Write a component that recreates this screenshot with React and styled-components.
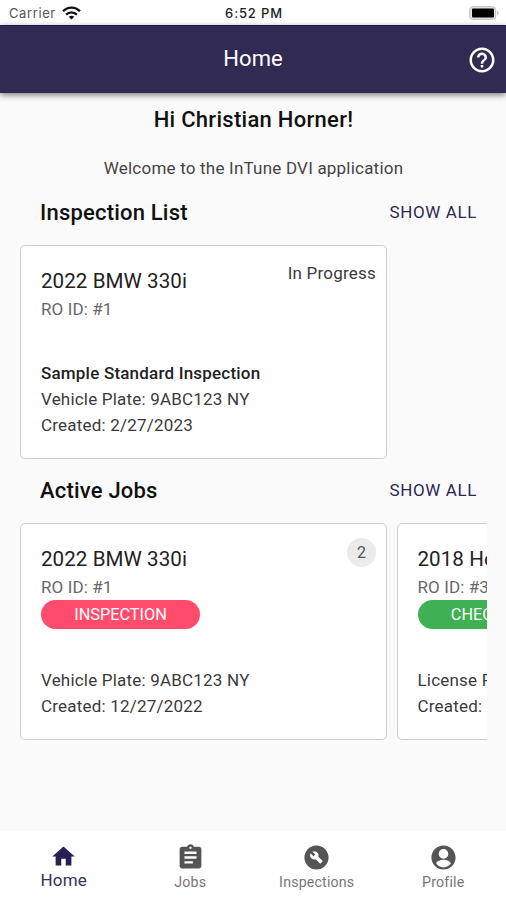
import React from "react";
import styled, { createGlobalStyle } from "styled-components";
import {
  MdHome,
  MdAssignment,
  MdBuildCircle,
  MdHelpOutline,
} from "react-icons/md";

const GlobalStyle = createGlobalStyle`
  * { box-sizing: border-box; }
  body { margin: 0; background: #fafafa; font-family: Roboto, "Liberation Sans", sans-serif; color: #222; }
`;

const Screen = styled.div`
  width: 506px;
  height: 900px;
  display: flex;
  flex-direction: column;
  overflow: hidden;
  background: #fafafa;
`;

const StatusBar = styled.div`
  height: 25px;
  flex: none;
  display: grid;
  grid-template-columns: 1fr auto 1fr;
  align-items: center;
  padding: 1px 7px 0 9px;
  background: #fff;
  font-family: Inter, sans-serif;
  font-size: 13px;
  color: #555;
`;

const Carrier = styled.div`
  display: flex;
  align-items: center;
  gap: 6px;
  letter-spacing: 0.6px;
`;

const Clock = styled.div`
  font-weight: 500;
  font-size: 13px;
  letter-spacing: 0.85px;
  color: #222;
`;

const StatusEnd = styled.div`
  display: flex;
  justify-content: flex-end;
`;

const AppBar = styled.header`
  height: 68px;
  flex: none;
  display: grid;
  grid-template-columns: 48px 1fr 48px;
  align-items: center;
  background: #312b53;
  border-top: 1px solid #1d1650;
  box-shadow: 0 2px 6px rgba(0, 0, 0, 0.5);
  color: #fff;
  z-index: 1;
`;

const AppBarTitle = styled.h1`
  grid-column: 2;
  margin: 0 0 2px;
  text-align: center;
  font-size: 22px;
  font-weight: 400;
  letter-spacing: 0.1px;
`;

const HelpButton = styled.button`
  width: 48px;
  height: 48px;
  padding: 0;
  border: 0;
  background: none;
  color: inherit;
  display: grid;
  place-items: center;
`;

const Content = styled.main`
  flex: 1;
  min-height: 0;
  padding: 11px 19px 0 20px;
  overflow: hidden;
`;

const Greeting = styled.h2`
  margin: 0;
  text-align: center;
  font-size: 22px;
  line-height: 32px;
  font-weight: 500;
  letter-spacing: 0.28px;
  color: #111;
`;

const Welcome = styled.p`
  margin: 17px 0 0;
  text-align: center;
  font-size: 17px;
  line-height: 30px;
  letter-spacing: 0.21px;
  color: #444;
`;

const SectionHeader = styled.div`
  height: ${(p) => p.$height}px;
  padding: 0 10px ${(p) => p.$lift}px 20px;
  display: flex;
  align-items: center;
  justify-content: space-between;
`;

const SectionTitle = styled.h3`
  margin: 0;
  font-size: 22px;
  font-weight: 500;
  letter-spacing: 0.2px;
  color: #111;
`;

const ShowAll = styled.button`
  padding: 0;
  border: 0;
  background: none;
  font: inherit;
  font-size: 17px;
  letter-spacing: 0.6px;
  color: #2d2753;
`;

const CardRow = styled.div`
  display: flex;
  gap: 9.5px;
  overflow: hidden;
`;

const Card = styled.article`
  width: 367px;
  height: ${(p) => p.$height}px;
  flex: none;
  padding: 20px 10px 20px 20px;
  display: flex;
  flex-direction: column;
  justify-content: space-between;
  background: #fff;
  border: 1.5px solid #cfcfcf;
  border-radius: 5px;
`;

const CardTop = styled.div`
  display: flex;
  justify-content: space-between;
  align-items: flex-start;
`;

const Vehicle = styled.div`
  font-size: 20.6px;
  line-height: 30px;
  letter-spacing: 0.05px;
  color: #222;
`;

const OrderId = styled.div`
  font-size: 17px;
  line-height: 26px;
  letter-spacing: 0.1px;
  color: #686868;
`;

const Detail = styled.div`
  font-size: 17px;
  line-height: 26px;
  letter-spacing: 0.2px;
  font-weight: ${(p) => (p.$strong ? 500 : 400)};
  color: ${(p) => (p.$strong ? "#222" : "#3a3a3a")};
`;

const Status = styled.div`
  margin-top: -6px;
  font-size: 17px;
  line-height: 26px;
  letter-spacing: 0.22px;
  color: #3a3a3a;
`;

const Stage = styled.div`
  width: 159px;
  height: 29px;
  border-radius: 15px;
  display: grid;
  place-items: center;
  background: ${(p) => p.$color};
  color: #fff;
  font-size: 16.3px;
`;

const Count = styled.div`
  width: 29px;
  height: 29px;
  margin-top: -6px;
  border-radius: 50%;
  display: grid;
  place-items: center;
  background: #ebebeb;
  color: #555;
  font-size: 16px;
`;

const TabBar = styled.nav`
  height: 69px;
  flex: none;
  display: grid;
  grid-template-columns: repeat(4, 1fr);
  background: #fff;
`;

const Tab = styled.div`
  display: flex;
  flex-direction: column;
  align-items: center;
  padding: 12px 0 0 1px;
  color: ${(p) => (p.$active ? "#262055" : "#555")};
`;

const TabLabel = styled.span`
  font-size: ${(p) => (p.$active ? 17 : 14.2)}px;
  line-height: 20px;
  letter-spacing: ${(p) => (p.$active ? 0.2 : 0.18)}px;
  color: ${(p) => (p.$active ? "#373158" : "#777")};
`;

function WifiIcon() {
  return (
    <svg width="19" height="14" viewBox="0 0 19 14" fill="none" stroke="#111" strokeWidth="2.2">
      <path d="M1 5.3C5.8.4 13.2.4 18 5.3" />
      <path d="M4.1 8.6c3-3 7.8-3 10.8 0" />
      <path d="M9.5 13.4 6.8 10.7c1.5-1.3 3.9-1.3 5.4 0z" fill="#111" stroke="none" />
    </svg>
  );
}

function BatteryIcon() {
  return (
    <svg width="30" height="14" viewBox="0 0 30 14">
      <rect x="0.7" y="0.7" width="26" height="12.6" rx="3" fill="#e4e4e4" stroke="#bdbdbd" />
      <rect x="3" y="2.5" width="22" height="9" rx="1" fill="#000" />
      <path d="M28 4.7c2 .8 2 3.8 0 4.6z" fill="#bdbdbd" />
    </svg>
  );
}

function ProfileIcon({ size }) {
  return (
    <svg width={size} height={size} viewBox="0 0 24 24" fill="currentColor">
      <path d="M12 2C6.48 2 2 6.48 2 12s4.48 10 10 10 10-4.48 10-10S17.52 2 12 2zm0 3a4 4 0 1 1 0 8 4 4 0 0 1 0-8zm0 15.2c-2.5 0-4.71-1.28-6-3.22.03-1.99 4-3.08 6-3.08 1.99 0 5.97 1.09 6 3.08-1.29 1.94-3.5 3.22-6 3.22z" />
    </svg>
  );
}

const tabs = [
  { label: "Home", Icon: MdHome, active: true },
  { label: "Jobs", Icon: MdAssignment },
  { label: "Inspections", Icon: MdBuildCircle },
  { label: "Profile", Icon: ProfileIcon },
];

const jobs = [
  {
    vehicle: "2022 BMW 330i",
    order: "RO ID: #1",
    stage: "INSPECTION",
    color: "#ff4c6c",
    count: 2,
    details: ["Vehicle Plate: 9ABC123 NY", "Created: 12/27/2022"],
  },
  {
    vehicle: "2018 Honda",
    order: "RO ID: #3",
    stage: "CHECKED IN",
    color: "#3fb054",
    details: ["License Plate:", "Created:"],
  },
];

export default function App() {
  return (
    <Screen>
      <GlobalStyle />
      <StatusBar>
        <Carrier>
          Carrier
          <WifiIcon />
        </Carrier>
        <Clock>6:52 PM</Clock>
        <StatusEnd>
          <BatteryIcon />
        </StatusEnd>
      </StatusBar>
      <AppBar>
        <AppBarTitle>Home</AppBarTitle>
        <HelpButton aria-label="Help">
          <MdHelpOutline size={30} />
        </HelpButton>
      </AppBar>
      <Content>
        <Greeting>Hi Christian Horner!</Greeting>
        <Welcome>Welcome to the InTune DVI application</Welcome>
        <SectionHeader $height={62} $lift={4}>
          <SectionTitle>Inspection List</SectionTitle>
          <ShowAll>SHOW ALL</ShowAll>
        </SectionHeader>
        <CardRow>
          <Card $height={214}>
            <CardTop>
              <div>
                <Vehicle>2022 BMW 330i</Vehicle>
                <OrderId>RO ID: #1</OrderId>
              </div>
              <Status>In Progress</Status>
            </CardTop>
            <div>
              <Detail $strong>Sample Standard Inspection</Detail>
              <Detail>Vehicle Plate: 9ABC123 NY</Detail>
              <Detail>Created: 2/27/2023</Detail>
            </div>
          </Card>
        </CardRow>
        <SectionHeader $height={64} $lift={2}>
          <SectionTitle>Active Jobs</SectionTitle>
          <ShowAll>SHOW ALL</ShowAll>
        </SectionHeader>
        <CardRow>
          {jobs.map((job) => (
            <Card key={job.order} $height={217}>
              <CardTop>
                <div>
                  <Vehicle>{job.vehicle}</Vehicle>
                  <OrderId>{job.order}</OrderId>
                  <Stage $color={job.color}>{job.stage}</Stage>
                </div>
                {job.count && <Count>{job.count}</Count>}
              </CardTop>
              <div>
                {job.details.map((line) => (
                  <Detail key={line}>{line}</Detail>
                ))}
              </div>
            </Card>
          ))}
        </CardRow>
      </Content>
      <TabBar>
        {tabs.map(({ label, Icon, active }) => (
          <Tab key={label} $active={active}>
            <Icon size={active ? 27 : 29} />
            <TabLabel $active={active}>{label}</TabLabel>
          </Tab>
        ))}
      </TabBar>
    </Screen>
  );
}
